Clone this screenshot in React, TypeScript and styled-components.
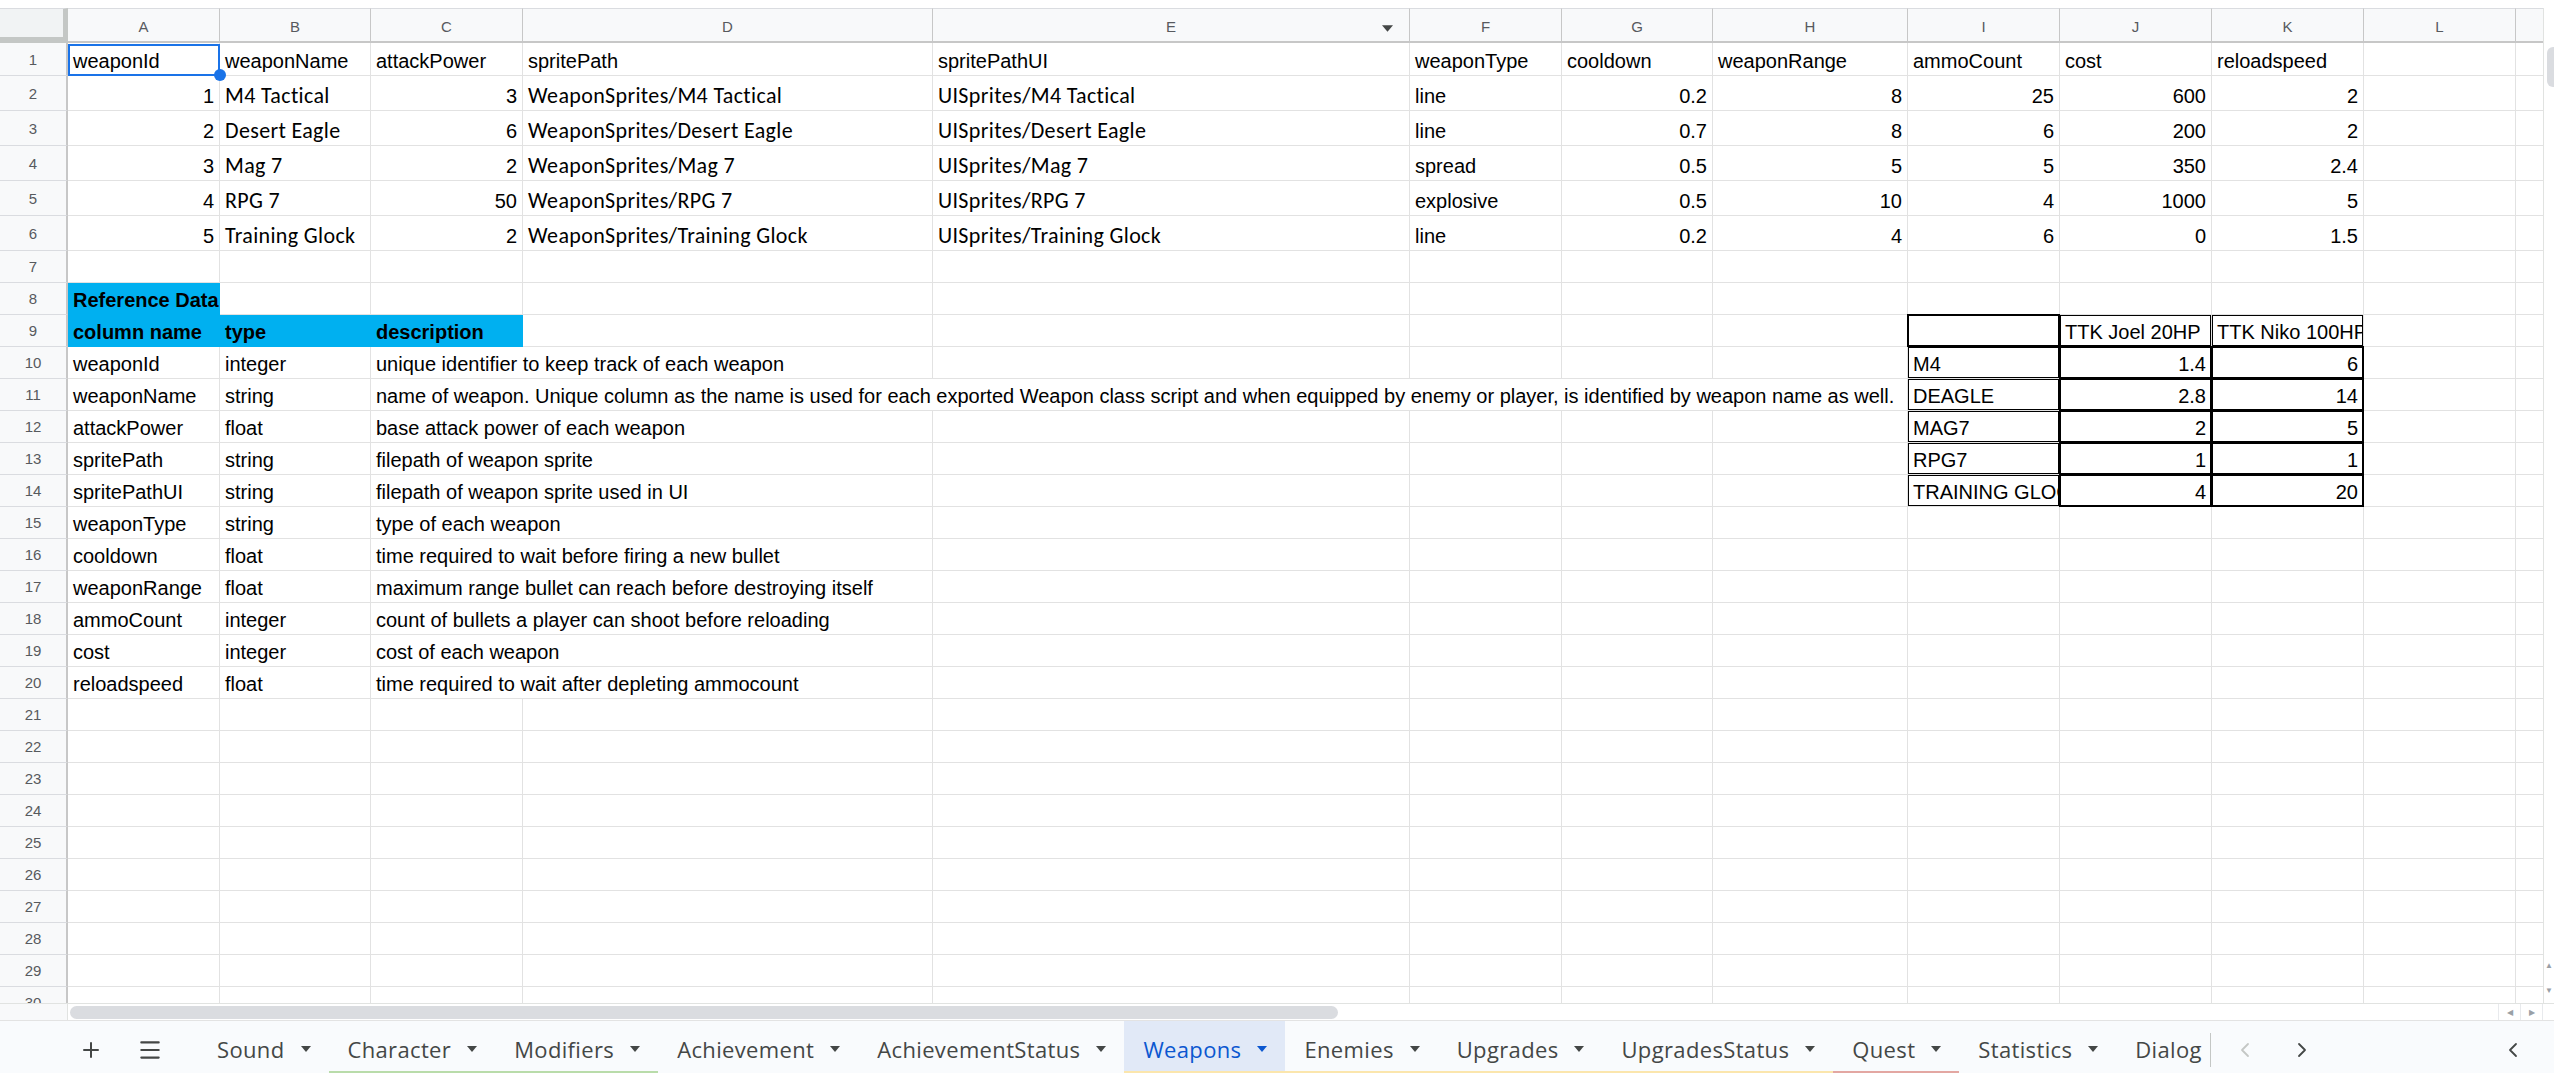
import React from 'react'
import styled, { createGlobalStyle, css } from 'styled-components'
import { Plus, Menu, ChevronLeft, ChevronRight } from 'lucide-react'

type Align = 'left' | 'right'
type Face = 'arial' | 'calibri'

interface CellDef {
  text?: string | number
  align?: Align
  face?: Face
  bold?: boolean
  fill?: string
  span?: number
  boxed?: boolean
  clip?: boolean
  selected?: boolean
}

const GlobalStyle = createGlobalStyle`
  html, body {
    margin: 0;
    padding: 0;
    background: #fff;
    overflow: hidden;
  }
`

const COL_WIDTHS = [152, 151, 152, 410, 477, 152, 151, 195, 152, 152, 152, 152, 60]
const COL_LETTERS = ['A', 'B', 'C', 'D', 'E', 'F', 'G', 'H', 'I', 'J', 'K', 'L', '']
const GRID = '#e2e2e2'
const HEAD_LINE = '#c7c7c7'
const REF_BLUE = '#00b0f0'

const Page = styled.div`
  width: 2554px;
  height: 1073px;
  overflow: hidden;
  display: flex;
  flex-direction: column;
  background: #fff;
  font-family: 'Liberation Sans', Arial, sans-serif;
`

const TopGap = styled.div`
  flex: 0 0 8px;
  background: #fff;
`

const SheetBody = styled.div`
  flex: 0 0 995px;
  display: flex;
  overflow: hidden;
`

const GridPane = styled.div`
  flex: 1 1 auto;
  min-width: 0;
  overflow: hidden;
  display: flex;
  flex-direction: column;
`

const GridRow = styled.div<{ $h: number }>`
  display: flex;
  flex: 0 0 ${p => p.$h}px;
  height: ${p => p.$h}px;
`

const Corner = styled.div`
  flex: 0 0 68px;
  box-sizing: border-box;
  background: #f1f3f4;
  border-top: 1px solid #dadce0;
  border-right: 5px solid #c4c7c5;
  border-bottom: 6px solid #c4c7c5;
`

const ColHead = styled.div<{ $w: number }>`
  position: relative;
  flex: 0 0 ${p => p.$w}px;
  min-width: 0;
  box-sizing: border-box;
  background: #f8f9fa;
  border-top: 1px solid #dadce0;
  border-right: 1px solid ${HEAD_LINE};
  border-bottom: 2px solid ${HEAD_LINE};
  display: flex;
  align-items: center;
  justify-content: center;
  padding-top: 2px;
  font-size: 15px;
  color: #575a5e;
`

const HeadArrow = styled.svg`
  position: absolute;
  right: 16px;
  top: 16px;
`

const RowHead = styled.div`
  flex: 0 0 68px;
  box-sizing: border-box;
  background: #f8f9fa;
  border-right: 2px solid ${HEAD_LINE};
  border-bottom: 1px solid #dadce0;
  display: flex;
  align-items: center;
  justify-content: center;
  font-size: 15px;
  color: #575a5e;
`

const Cell = styled.div<{
  $w: number
  $align: Align
  $face: Face
  $bold?: boolean
  $fill?: string
  $boxed?: boolean
  $clip?: boolean
  $selected?: boolean
}>`
  position: relative;
  flex: 0 0 ${p => p.$w}px;
  width: ${p => p.$w}px;
  min-width: 0;
  box-sizing: border-box;
  background: ${p => p.$fill || '#fff'};
  border-right: 1px solid ${p => p.$fill || GRID};
  border-bottom: 1px solid ${p => p.$fill || GRID};
  display: flex;
  align-items: flex-end;
  justify-content: ${p => (p.$align === 'right' ? 'flex-end' : 'flex-start')};
  padding: 0 5px 3px 5px;
  overflow: ${p => (p.$clip ? 'hidden' : 'visible')};
  white-space: nowrap;
  color: #000;
  font-weight: ${p => (p.$bold ? 700 : 400)};
  line-height: 22px;
  ${p =>
    p.$face === 'calibri'
      ? css`
          font-family: Carlito, Lato, 'Liberation Sans', sans-serif;
          font-size: 22px;
          letter-spacing: 0.35px;
        `
      : css`
          font-family: 'Liberation Sans', Arial, sans-serif;
          font-size: 20px;
        `}
  ${p =>
    p.$boxed &&
    css`
      &::after {
        content: '';
        position: absolute;
        left: -1px;
        top: -1px;
        right: -1px;
        bottom: -1px;
        border: 2px solid #000;
        pointer-events: none;
        z-index: 1;
      }
    `}
  ${p =>
    p.$selected &&
    css`
      &::after {
        content: '';
        position: absolute;
        left: 0;
        top: 1px;
        right: -1px;
        bottom: -1px;
        border: 2px solid #1a73e8;
        pointer-events: none;
        z-index: 2;
      }
    `}
`

const FillHandle = styled.span`
  position: absolute;
  right: -7px;
  bottom: -6px;
  width: 12px;
  height: 12px;
  border-radius: 50%;
  background: #1a73e8;
  z-index: 3;
`

const VScroll = styled.div`
  flex: 0 0 11px;
  box-sizing: border-box;
  display: flex;
  flex-direction: column;
  background: #fff;
  border-left: 1px solid #e1e3e1;
`

const VThumb = styled.div`
  margin: 39px 0 0 3px;
  height: 40px;
  background: #dadce0;
  border-radius: 6px 0 0 6px;
`

const ScrollArrows = styled.div`
  margin-top: auto;
  display: flex;
  flex-direction: column;
`

const VArrow = styled.div`
  height: 25px;
  display: flex;
  align-items: center;
  justify-content: center;
  color: #9aa0a6;
  font-size: 8px;
`

const HStrip = styled.div`
  flex: 0 0 17px;
  box-sizing: border-box;
  display: flex;
  background: #fff;
  border-top: 1px solid #e1e3e1;
`

const HStripLead = styled.div`
  flex: 0 0 68px;
  box-sizing: border-box;
  background: #f8f9fa;
  border-right: 1px solid #e1e3e1;
`

const HTrack = styled.div`
  flex: 1 1 auto;
  display: flex;
  align-items: center;
  padding-left: 2px;
`

const HThumb = styled.div`
  width: 1268px;
  height: 13px;
  border-radius: 7px;
  background: #dadce0;
`

const HArrow = styled.div`
  flex: 0 0 22px;
  box-sizing: border-box;
  border-left: 1px solid #e8eaed;
  display: flex;
  align-items: center;
  justify-content: center;
  color: #9aa0a6;
  font-size: 8px;
`

const HCorner = styled.div`
  flex: 0 0 11px;
  border-left: 1px solid #e8eaed;
`

const TabBar = styled.div`
  flex: 0 0 53px;
  box-sizing: border-box;
  display: flex;
  align-items: stretch;
  padding-left: 70px;
  background: #f9fbfd;
  border-top: 1px solid #e3e3e3;
`

const BarButton = styled.div<{ $dim?: boolean; $push?: boolean }>`
  flex: 0 0 42px;
  display: flex;
  align-items: center;
  justify-content: center;
  padding-top: 6px;
  color: ${p => (p.$dim ? '#c4c7c5' : '#444746')};
  ${p => p.$push && 'margin-left: auto; margin-right: 20px;'}
`

const ButtonGap = styled.div<{ $w: number }>`
  flex: 0 0 ${p => p.$w}px;
`

const TabStrip = styled.div`
  flex: 0 0 2012px;
  display: flex;
  overflow: hidden;
`

const TabDivider = styled.div`
  flex: 0 0 1px;
  align-self: center;
  height: 34px;
  margin-top: 6px;
  background: #c4c7c5;
`

const Tab = styled.div<{ $active?: boolean; $line?: string }>`
  flex: 0 0 auto;
  box-sizing: border-box;
  display: flex;
  align-items: center;
  gap: 16px;
  padding: 5px 18px 0 19px;
  background: ${p => (p.$active ? '#e1e9f7' : 'transparent')};
  color: ${p => (p.$active ? '#0b57d0' : '#444746')};
  border-bottom: 2px solid ${p => p.$line || 'transparent'};
  font-family: 'Open Sans', 'Liberation Sans', sans-serif;
  font-size: 22px;
  font-weight: ${p => (p.$active ? 500 : 400)};
  letter-spacing: 0.35px;
  white-space: nowrap;
`

const Caret = () => (
  <svg width="10" height="6" viewBox="0 0 10 6">
    <path d="M0 0h10L5 6z" fill="currentColor" />
  </svg>
)

const weapons: (string | number)[][] = [
  [1, 'M4 Tactical', 3, 'WeaponSprites/M4 Tactical', 'UISprites/M4 Tactical', 'line', 0.2, 8, 25, 600, 2],
  [2, 'Desert Eagle', 6, 'WeaponSprites/Desert Eagle', 'UISprites/Desert Eagle', 'line', 0.7, 8, 6, 200, 2],
  [3, 'Mag 7', 2, 'WeaponSprites/Mag 7', 'UISprites/Mag 7', 'spread', 0.5, 5, 5, 350, 2.4],
  [4, 'RPG 7', 50, 'WeaponSprites/RPG 7', 'UISprites/RPG 7', 'explosive', 0.5, 10, 4, 1000, 5],
  [5, 'Training Glock', 2, 'WeaponSprites/Training Glock', 'UISprites/Training Glock', 'line', 0.2, 4, 6, 0, 1.5]
]

const headers = [
  'weaponId', 'weaponName', 'attackPower', 'spritePath', 'spritePathUI', 'weaponType',
  'cooldown', 'weaponRange', 'ammoCount', 'cost', 'reloadspeed'
]

const reference: [string, string, string][] = [
  ['weaponId', 'integer', 'unique identifier to keep track of each weapon'],
  ['weaponName', 'string', 'name of weapon. Unique column as the name is used for each exported Weapon class script and when equipped by enemy or player, is identified by weapon name as well.'],
  ['attackPower', 'float', 'base attack power of each weapon'],
  ['spritePath', 'string', 'filepath of weapon sprite'],
  ['spritePathUI', 'string', 'filepath of weapon sprite used in UI'],
  ['weaponType', 'string', 'type of each weapon'],
  ['cooldown', 'float', 'time required to wait before firing a new bullet'],
  ['weaponRange', 'float', 'maximum range bullet can reach before destroying itself'],
  ['ammoCount', 'integer', 'count of bullets a player can shoot before reloading'],
  ['cost', 'integer', 'cost of each weapon'],
  ['reloadspeed', 'float', 'time required to wait after depleting ammocount']
]

const ttk: [string, number, number][] = [
  ['M4', 1.4, 6],
  ['DEAGLE', 2.8, 14],
  ['MAG7', 2, 5],
  ['RPG7', 1, 1],
  ['TRAINING GLOCK', 4, 20]
]

const buildRows = () => {
  const rows: Record<number, Record<number, CellDef>> = {}
  for (let r = 1; r <= 30; r++) rows[r] = {}

  headers.forEach((h, c) => {
    rows[1][c] = { text: h, selected: c === 0 }
  })

  weapons.forEach((w, i) => {
    const row = rows[i + 2]
    w.forEach((v, c) => {
      const calibri = c === 1 || c === 3 || c === 4
      row[c] = {
        text: v,
        align: typeof v === 'number' ? 'right' : 'left',
        face: calibri ? 'calibri' : 'arial'
      }
    })
  })

  rows[8][0] = { text: 'Reference Data', bold: true, fill: REF_BLUE }
  rows[9][0] = { text: 'column name', bold: true, fill: REF_BLUE }
  rows[9][1] = { text: 'type', bold: true, fill: REF_BLUE }
  rows[9][2] = { text: 'description', bold: true, fill: REF_BLUE }

  reference.forEach(([name, type, desc], i) => {
    const row = rows[i + 10]
    row[0] = { text: name }
    row[1] = { text: type }
    row[2] = { text: desc, span: i === 1 ? 6 : 2 }
  })

  rows[9][8] = { boxed: true }
  rows[9][9] = { text: 'TTK Joel 20HP', boxed: true, clip: true }
  rows[9][10] = { text: 'TTK Niko 100HP', boxed: true, clip: true }
  ttk.forEach(([label, joel, niko], i) => {
    const row = rows[i + 10]
    row[8] = { text: label, boxed: true, clip: true }
    row[9] = { text: joel, align: 'right', boxed: true }
    row[10] = { text: niko, align: 'right', boxed: true }
  })

  return rows
}

const rowHeight = (r: number) => (r === 1 ? 33 : r <= 6 ? 35 : 32)

const tabs: { name: string; line?: string; active?: boolean }[] = [
  { name: 'Sound' },
  { name: 'Character', line: '#b9dcaa' },
  { name: 'Modifiers', line: '#b9dcaa' },
  { name: 'Achievement' },
  { name: 'AchievementStatus' },
  { name: 'Weapons', line: '#fbe6ad', active: true },
  { name: 'Enemies', line: '#fbe6ad' },
  { name: 'Upgrades', line: '#fbe6ad' },
  { name: 'UpgradesStatus', line: '#fbe6ad' },
  { name: 'Quest', line: '#e3a7a2' },
  { name: 'Statistics' },
  { name: 'Dialog' }
]

const SheetRow: React.FC<{ r: number; cells: Record<number, CellDef> }> = ({ r, cells }) => {
  const out: React.ReactNode[] = []
  let c = 0
  while (c < COL_WIDTHS.length) {
    const def = cells[c] || {}
    const span = def.span || 1
    const width = COL_WIDTHS.slice(c, c + span).reduce((a, b) => a + b, 0)
    out.push(
      <Cell
        key={c}
        $w={width}
        $align={def.align || 'left'}
        $face={def.face || 'arial'}
        $bold={def.bold}
        $fill={def.fill}
        $boxed={def.boxed}
        $clip={def.clip}
        $selected={def.selected}
      >
        {def.text !== undefined && <span>{def.text}</span>}
        {def.selected && <FillHandle />}
      </Cell>
    )
    c += span
  }
  return (
    <GridRow $h={rowHeight(r)}>
      <RowHead>{r}</RowHead>
      {out}
    </GridRow>
  )
}

export default function App() {
  const rows = buildRows()
  return (
    <Page>
      <GlobalStyle />
      <TopGap />
      <SheetBody>
        <GridPane>
          <GridRow $h={35}>
            <Corner />
            {COL_WIDTHS.map((w, i) => (
              <ColHead key={i} $w={w}>
                {COL_LETTERS[i]}
                {i === 4 && (
                  <HeadArrow width="11" height="7" viewBox="0 0 10 6">
                    <path d="M0 0h10L5 6z" fill="#444746" />
                  </HeadArrow>
                )}
              </ColHead>
            ))}
          </GridRow>
          {Array.from({ length: 30 }, (_, i) => (
            <SheetRow key={i} r={i + 1} cells={rows[i + 1]} />
          ))}
        </GridPane>
        <VScroll>
          <VThumb />
          <ScrollArrows>
            <VArrow>▲</VArrow>
            <VArrow>▼</VArrow>
          </ScrollArrows>
        </VScroll>
      </SheetBody>
      <HStrip>
        <HStripLead />
        <HTrack>
          <HThumb />
        </HTrack>
        <HArrow>◀</HArrow>
        <HArrow>▶</HArrow>
        <HCorner />
      </HStrip>
      <TabBar>
        <BarButton>
          <Plus size={24} strokeWidth={2} />
        </BarButton>
        <ButtonGap $w={17} />
        <BarButton>
          <Menu size={26} strokeWidth={2} />
        </BarButton>
        <ButtonGap $w={27} />
        <TabStrip>
          {tabs.map(t => (
            <Tab key={t.name} $active={t.active} $line={t.line}>
              {t.name}
              <Caret />
            </Tab>
          ))}
        </TabStrip>
        <TabDivider />
        <ButtonGap $w={13} />
        <BarButton $dim>
          <ChevronLeft size={24} strokeWidth={1.8} />
        </BarButton>
        <ButtonGap $w={15} />
        <BarButton>
          <ChevronRight size={24} strokeWidth={1.8} />
        </BarButton>
        <BarButton $push>
          <ChevronLeft size={24} strokeWidth={1.8} />
        </BarButton>
      </TabBar>
    </Page>
  )
}
